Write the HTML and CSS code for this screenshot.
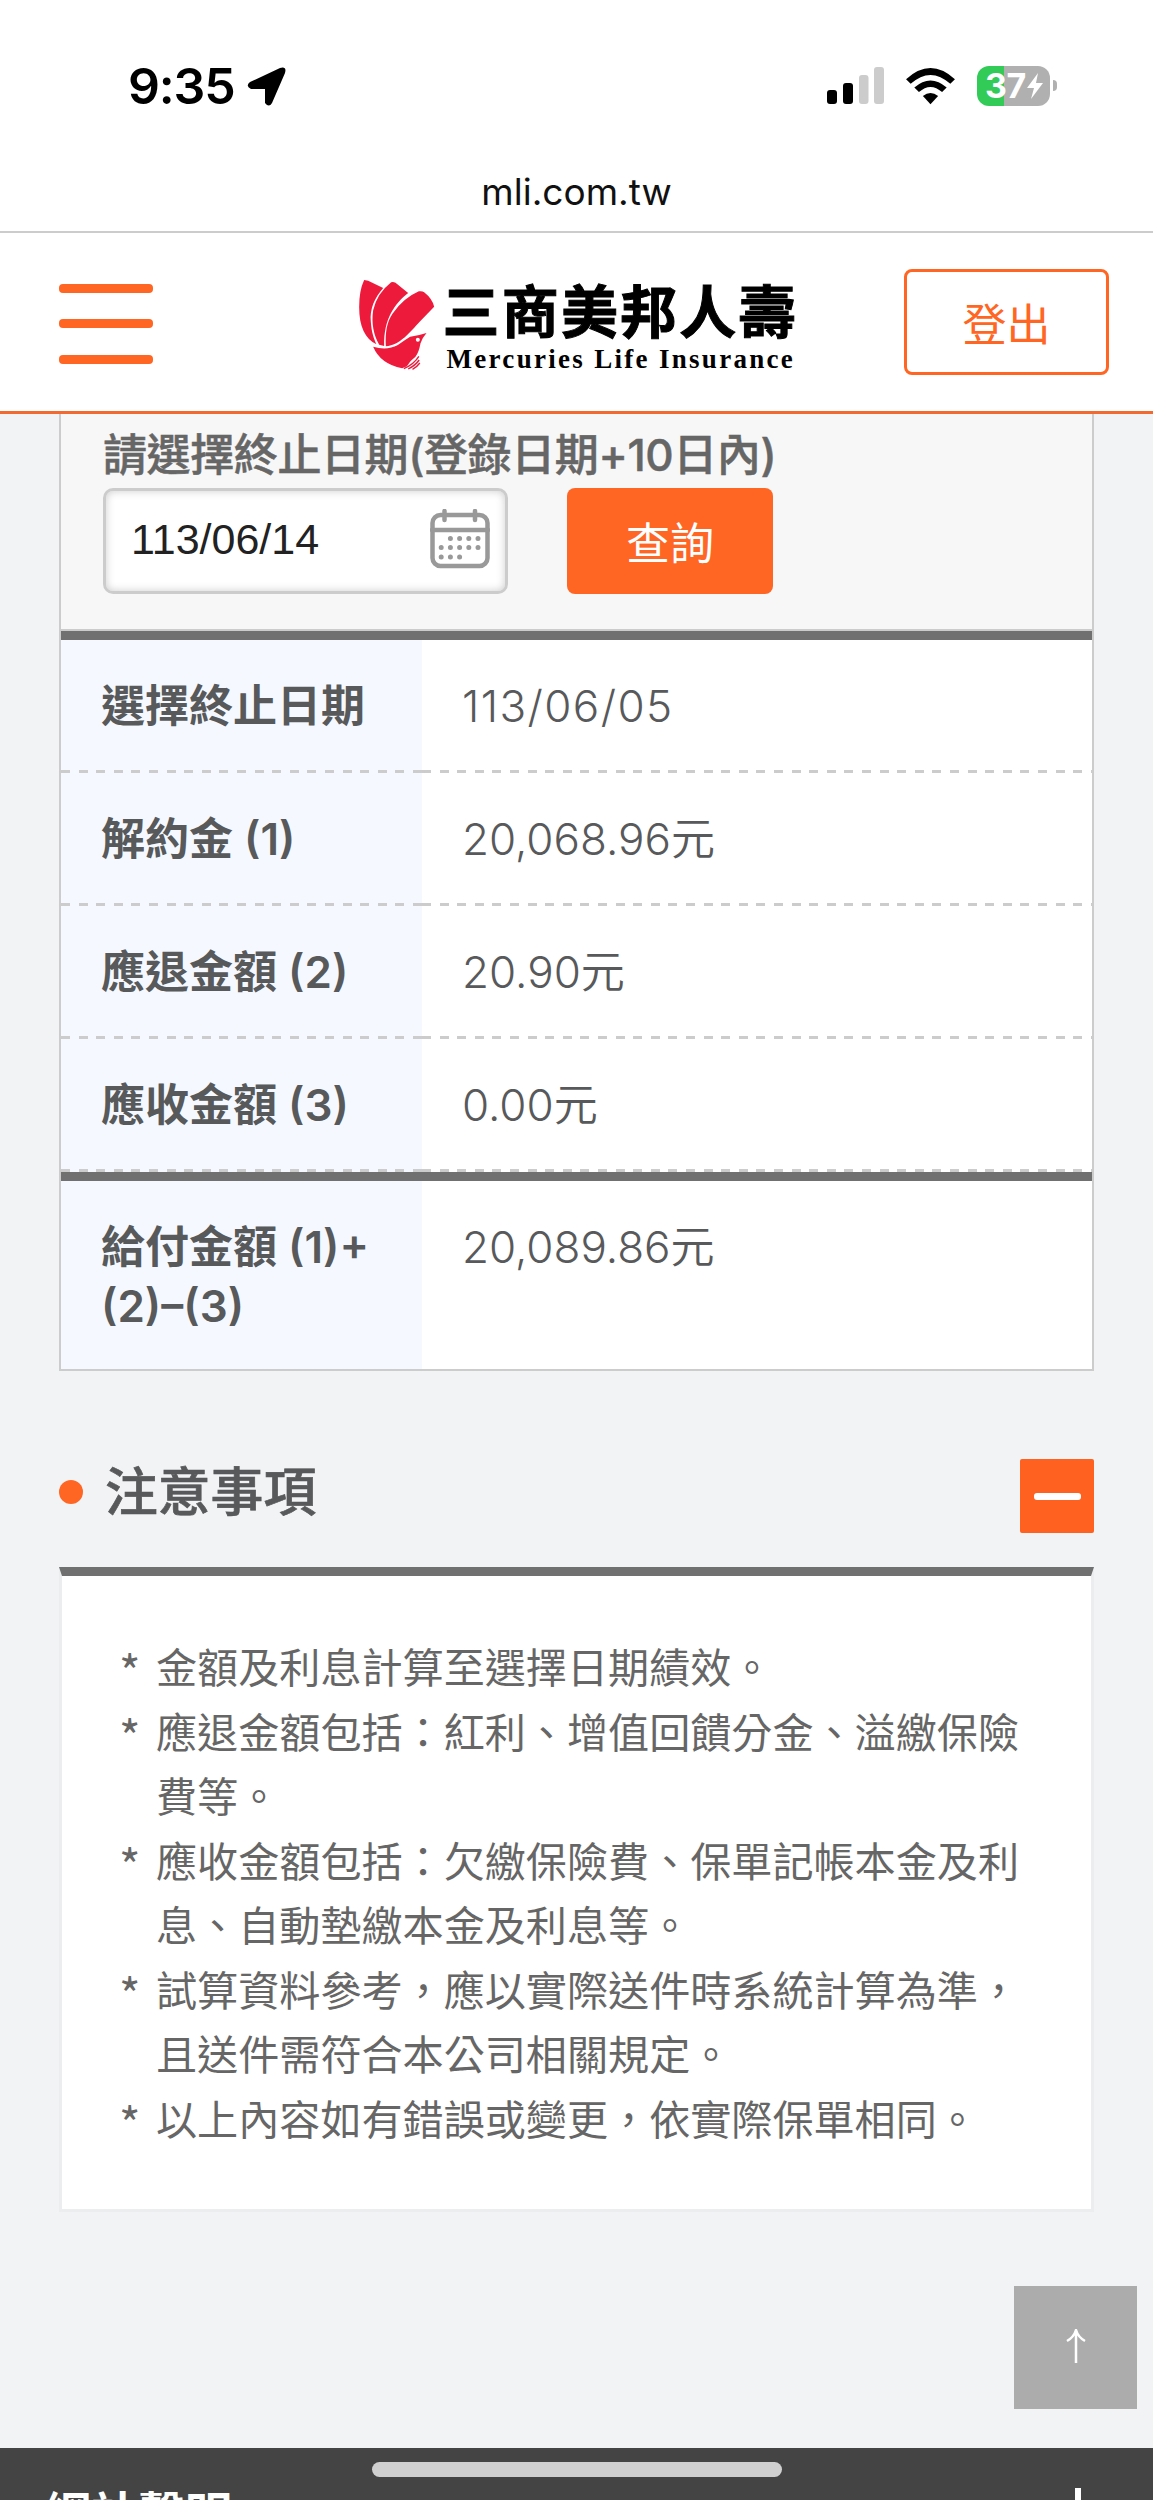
FILE: index.html
```
<!DOCTYPE html>
<html lang="zh-Hant">
<head>
  <meta charset="UTF-8">
  <meta name="viewport" content="width=device-width, initial-scale=1.0">
  <title>三商美邦人壽</title>
  <link rel="stylesheet" href="styles.css">
</head>
<body>
  <div class="status-bar">
    <div class="clock">
      <span class="clock-time">9:35</span>
      <svg class="location" viewBox="0 0 39 39"><path d="M33 1 Q40 -1 38 6 L25 36 Q22 41 18 36 V22 H4 Q-2 19 3 15 Z"/></svg>
    </div>
    <div class="indicators">
      <svg class="signal" viewBox="0 0 58 38">
        <rect x="0" y="23" width="10" height="14" rx="3"/>
        <rect x="16" y="16" width="10" height="21" rx="3"/>
        <rect class="off" x="32" y="8" width="9.500" height="29" rx="3"/>
        <rect class="off" x="47" y="0" width="10" height="37" rx="3"/>
      </svg>
      <svg class="wifi" viewBox="0 0 148 112">
        <path d="M0 34 Q74 -34 148 34 L134 48 Q74 -6 14 48 Z"/>
        <path d="M25 59 Q74 16 123 59 L109 73 Q74 42 39 73 Z"/>
        <path d="M51 85 Q74 66 97 85 L74 110 Z"/>
      </svg>
      <div class="battery">
        <span class="level">37</span>
        <svg class="bolt" viewBox="0 0 16 26"><path d="M11 0 L0 15 H7 L4 26 L16 10 H9 Z"/></svg>
      </div>
    </div>
  </div>
  <div class="address">mli.com.tw</div>

  <header class="header">
    <div class="menu"><span></span><span></span><span></span></div>
    <div class="logo">
      <svg class="logo-mark" viewBox="54 56 230 276">
        <path d="M72 59 L84 61 L129 83 C104 112 88 145 92 185 C94 215 101 235 109 252 C75 235 57 200 57 140 Q57 90 72 59 Z"/>
        <path d="M153 66 Q158 63 166 67 L204 98 C165 128 130 175 132 257 L117 253 C101 225 93 190 99 150 Q110 100 153 66 Z"/>
        <path d="M236 93 Q246 91 252 96 Q276 115 282 139 L240 183 C210 215 180 255 137 258 C135 215 140 185 157 160 Q190 113 236 93 Z"/>
        <path d="M99 259 Q140 272 173 254 Q195 238 210 229 Q235 226 259 218 Q248 230 241 249 Q236 277 226 289 Q210 300 200 318 L186 324 Q120 310 99 259 Z"/>
        <path class="tail" d="M191 325 Q222 311 236 288 M204 326 Q226 315 237 299 M217 327 Q230 320 239 308"/>
        <circle class="eye" cx="233" cy="238" r="6"/>
      </svg>
      <div class="logo-text">
        <div class="logo-zh">三商美邦人壽</div>
        <div class="logo-en">Mercuries Life Insurance</div>
      </div>
    </div>
    <button class="logout">登出</button>
  </header>

  <main class="content">
    <div class="search">
      <label class="search-label">請選擇終止日期(登錄日期+10日內)</label>
      <div class="search-row">
        <div class="date-input">
          <span>113/06/14</span>
          <svg class="calendar" viewBox="0 0 60 60">
            <rect x="2.500" y="6" width="55" height="51" rx="8"/>
            <path d="M2 21 H58 M14.500 2 V11 M45 2 V11"/>
            <path class="dots" d="M20.400 29.500 h28 M11.200 38.500 h37.500 M11.200 48 h20"/>
          </svg>
        </div>
        <button class="query">查詢</button>
      </div>
    </div>

    <div class="result">
      <div class="row"><div class="name">選擇終止日期</div><div class="value date">113/06/05</div></div>
      <div class="row"><div class="name">解約金 (1)</div><div class="value">20,068.96元</div></div>
      <div class="row"><div class="name">應退金額 (2)</div><div class="value">20.90元</div></div>
      <div class="row"><div class="name">應收金額 (3)</div><div class="value">0.00元</div></div>
      <div class="row total"><div class="name">給付金額 (1)+<br>(2)–(3)</div><div class="value">20,089.86元</div></div>
    </div>

    <div class="notice-title">
      <h2>注意事項</h2>
      <button class="toggle"><span></span></button>
    </div>

    <ul class="notice">
      <li>金額及利息計算至選擇日期績效。</li>
      <li>應退金額包括：紅利、增值回饋分金、溢繳保險費等。</li>
      <li>應收金額包括：欠繳保險費、保單記帳本金及利息、自動墊繳本金及利息等。</li>
      <li>試算資料參考，應以實際送件時系統計算為準，且送件需符合本公司相關規定。</li>
      <li>以上內容如有錯誤或變更，依實際保單相同。</li>
    </ul>
  </main>

  <footer class="footer">
    <span>網站聲明</span>
    <i class="plus"></i>
  </footer>

  <div class="to-top">
    <svg viewBox="0 0 22 34"><path d="M11 34 V2 M2 12 Q9 8 11 1 Q13 8 20 12"/></svg>
  </div>
  <div class="home-indicator"></div>
</body>
</html>
```
FILE: styles.css
```
* {
  box-sizing: border-box;
}

body {
  margin: 0;
  height: 2500px;
  overflow: hidden;
  position: relative;
  display: flex;
  flex-direction: column;
  background: #f1f3f5;
  color: #58595b;
  font-family: Inter, "Noto Sans CJK TC", sans-serif;
  font-size: 44px;
}

button {
  font-family: inherit;
  font-size: 44px;
  padding: 0;
  border: none;
}

/* status bar */
.status-bar {
  height: 160px;
  padding: 12px 103px 0 128px;
  display: flex;
  justify-content: space-between;
  align-items: center;
  background: #fff;
  color: #000;
}

.clock,
.indicators {
  display: flex;
  align-items: center;
}

.clock-time {
  width: 119px;
  font-size: 50px;
  font-weight: 600;
  letter-spacing: -1.2px;
}

.location {
  width: 39px;
  height: 39px;
}

.signal {
  width: 58px;
  height: 38px;
  margin-right: 21px;
}

.signal .off {
  fill: #ccc;
}

.wifi {
  width: 49px;
  height: 37px;
  margin-right: 22px;
}

.battery {
  position: relative;
  width: 73px;
  height: 40px;
  border-radius: 12px;
  background: linear-gradient(to right, #32cb58 27px, #b0b0b0 27px);
  color: #fff;
  display: flex;
  align-items: center;
  padding-left: 8px;
}

.battery::after {
  content: "";
  position: absolute;
  left: 76px;
  top: 14px;
  width: 4px;
  height: 11px;
  border-radius: 0 6px 6px 0;
  background: #b0b0b0;
}

.level {
  width: 42px;
  font-size: 34px;
  font-weight: 700;
  letter-spacing: -0.5px;
  line-height: 40px;
}

.bolt {
  width: 16px;
  height: 26px;
  fill: #fff;
}

.address {
  height: 73px;
  line-height: 63px;
  background: #fff;
  border-bottom: 2px solid #ccc;
  color: #111;
  font-size: 37px;
  text-align: center;
}

/* header */
.header {
  height: 181px;
  padding: 0 44px 0 59px;
  display: flex;
  justify-content: space-between;
  align-items: center;
  background: #fff;
  border-bottom: 3px solid #f26a30;
}

.menu {
  width: 94px;
  height: 80px;
  margin-top: 3px;
  display: flex;
  flex-direction: column;
  justify-content: space-between;
}

.menu span {
  height: 9px;
  border-radius: 4px;
  background: #ff6624;
}

.logo {
  display: flex;
  margin-left: 95px;
  margin-top: 4px;
}

.logo-mark {
  width: 77px;
  height: 92px;
  margin-top: 3px;
  fill: #ed1a3b;
}

.tail {
  fill: none;
  stroke: #ed1a3b;
  stroke-width: 4;
}

.eye {
  fill: #fff;
}

.logo-text {
  margin-left: 8px;
  width: 352px;
  color: #000;
  white-space: nowrap;
}

.logo-zh {
  height: 69px;
  line-height: 74px;
  font-size: 57px;
  font-weight: 700;
  letter-spacing: 2.2px;
  -webkit-text-stroke: 1px #000;
}

.logo-en {
  padding-left: 4px;
  line-height: 28px;
  font-family: "Liberation Serif", serif;
  font-size: 27px;
  font-weight: 700;
  letter-spacing: 2.3px;
}

.logout {
  width: 205px;
  height: 106px;
  border: 3px solid #ff6624;
  border-radius: 8px;
  background: #fff;
  color: #ff6624;
}

.content {
  padding: 0 59px;
}

/* search panel */
.search {
  height: 217px;
  padding: 11px 42px 0;
  background: #f7f7f7;
  border: 2px solid #ccc;
  border-top: none;
}

.search-label {
  display: block;
  height: 63px;
  line-height: 60px;
  color: #666;
  font-weight: 500;
  letter-spacing: -0.4px;
  -webkit-text-stroke: 0.5px #666;
}

.search-row {
  display: flex;
  gap: 59px;
}

.date-input {
  width: 405px;
  height: 106px;
  padding: 0 15px 4px 25px;
  display: flex;
  justify-content: space-between;
  align-items: center;
  background: #fff;
  border: 3px solid #ccc;
  border-radius: 10px;
  box-shadow: inset 0 0 8px #ccc;
  color: #222;
  font-family: "Liberation Sans", sans-serif;
  font-size: 43px;
}

.calendar {
  width: 60px;
  height: 60px;
  fill: none;
  stroke: #999;
  stroke-width: 4.5;
  stroke-linecap: round;
}

.calendar .dots {
  stroke-width: 5;
  stroke-dasharray: 0 9.2;
}

.query {
  width: 206px;
  height: 106px;
  border-radius: 8px;
  background: #ff6624;
  color: #fff;
}

/* result table */
.result {
  border: 2px solid #ccc;
  border-top: none;
  padding-top: 9px;
  background: linear-gradient(#707070 9px, #fff 9px);
}

.row {
  height: 133px;
  display: grid;
  grid-template-columns: 361px 1fr;
  line-height: 59px;
}

.name,
.value {
  padding: 37px 40px 0;
  background: repeating-linear-gradient(to right, #ccc 0 9px, transparent 9px 17.6px) bottom / 100% 3px no-repeat;
}

.name {
  background-color: #f5f9ff;
  font-weight: 600;
  white-space: nowrap;
}

.value {
  font-weight: 350;
}

.date {
  letter-spacing: 1.4px;
}

.total {
  height: 197px;
  border-top: 9px solid #707070;
}

.total .name,
.total .value {
  background-image: none;
}

/* notice */
.notice-title {
  height: 196px;
  padding-top: 88px;
  display: flex;
  justify-content: space-between;
}

h2 {
  margin: 0;
  height: 66px;
  line-height: 64px;
  display: flex;
  align-items: center;
  font-size: 52.8px;
  font-weight: 500;
  -webkit-text-stroke: 0.7px #58595b;
}

h2::before {
  content: "";
  width: 24px;
  height: 24px;
  margin-right: 22px;
  border-radius: 50%;
  background: #ff6624;
}

.toggle {
  width: 74px;
  height: 74px;
  border-radius: 2px;
  background: #ff6120;
  display: flex;
  justify-content: center;
  align-items: center;
}

.toggle span {
  width: 47px;
  height: 7px;
  border-radius: 3px;
  background: #fff;
}

.notice {
  margin: 0;
  padding: 57px 72px 60px 94px;
  list-style: none;
  background: #fff;
  border: 3px solid #ebedef;
  border-top: 9px solid #707070;
  color: #666;
  font-size: 41.1px;
  line-height: 64.5px;
  font-family: "Noto Sans CJK TC", sans-serif;
}

.notice li {
  position: relative;
}

/* hanging asterisk */
.notice li::before {
  content: "*";
  position: absolute;
  left: -37px;
  top: 5px;
  font-size: 46px;
}

/* footer */
.footer {
  height: 52px;
  margin-top: auto;
  padding: 36px 42px 0 44px;
  display: flex;
  justify-content: space-between;
  overflow: hidden;
  background: #444;
  color: #fff;
  font-size: 47px;
  font-weight: 700;
  line-height: 60px;
}

.plus {
  width: 66px;
  height: 30px;
  margin-top: 4px;
  background: linear-gradient(#fff, #fff) center / 6px 100% no-repeat;
}

.to-top {
  position: absolute;
  right: 16px;
  top: 2286px;
  width: 123px;
  height: 123px;
  display: flex;
  justify-content: center;
  align-items: center;
  background: #acacac;
}

.to-top svg {
  width: 22px;
  height: 34px;
  margin-bottom: 4px;
  fill: none;
  stroke: #fff;
  stroke-width: 2.5;
}

.home-indicator {
  position: absolute;
  left: 372px;
  top: 2462px;
  width: 410px;
  height: 15px;
  border-radius: 8px;
  background: #d0d0d0;
}
```
